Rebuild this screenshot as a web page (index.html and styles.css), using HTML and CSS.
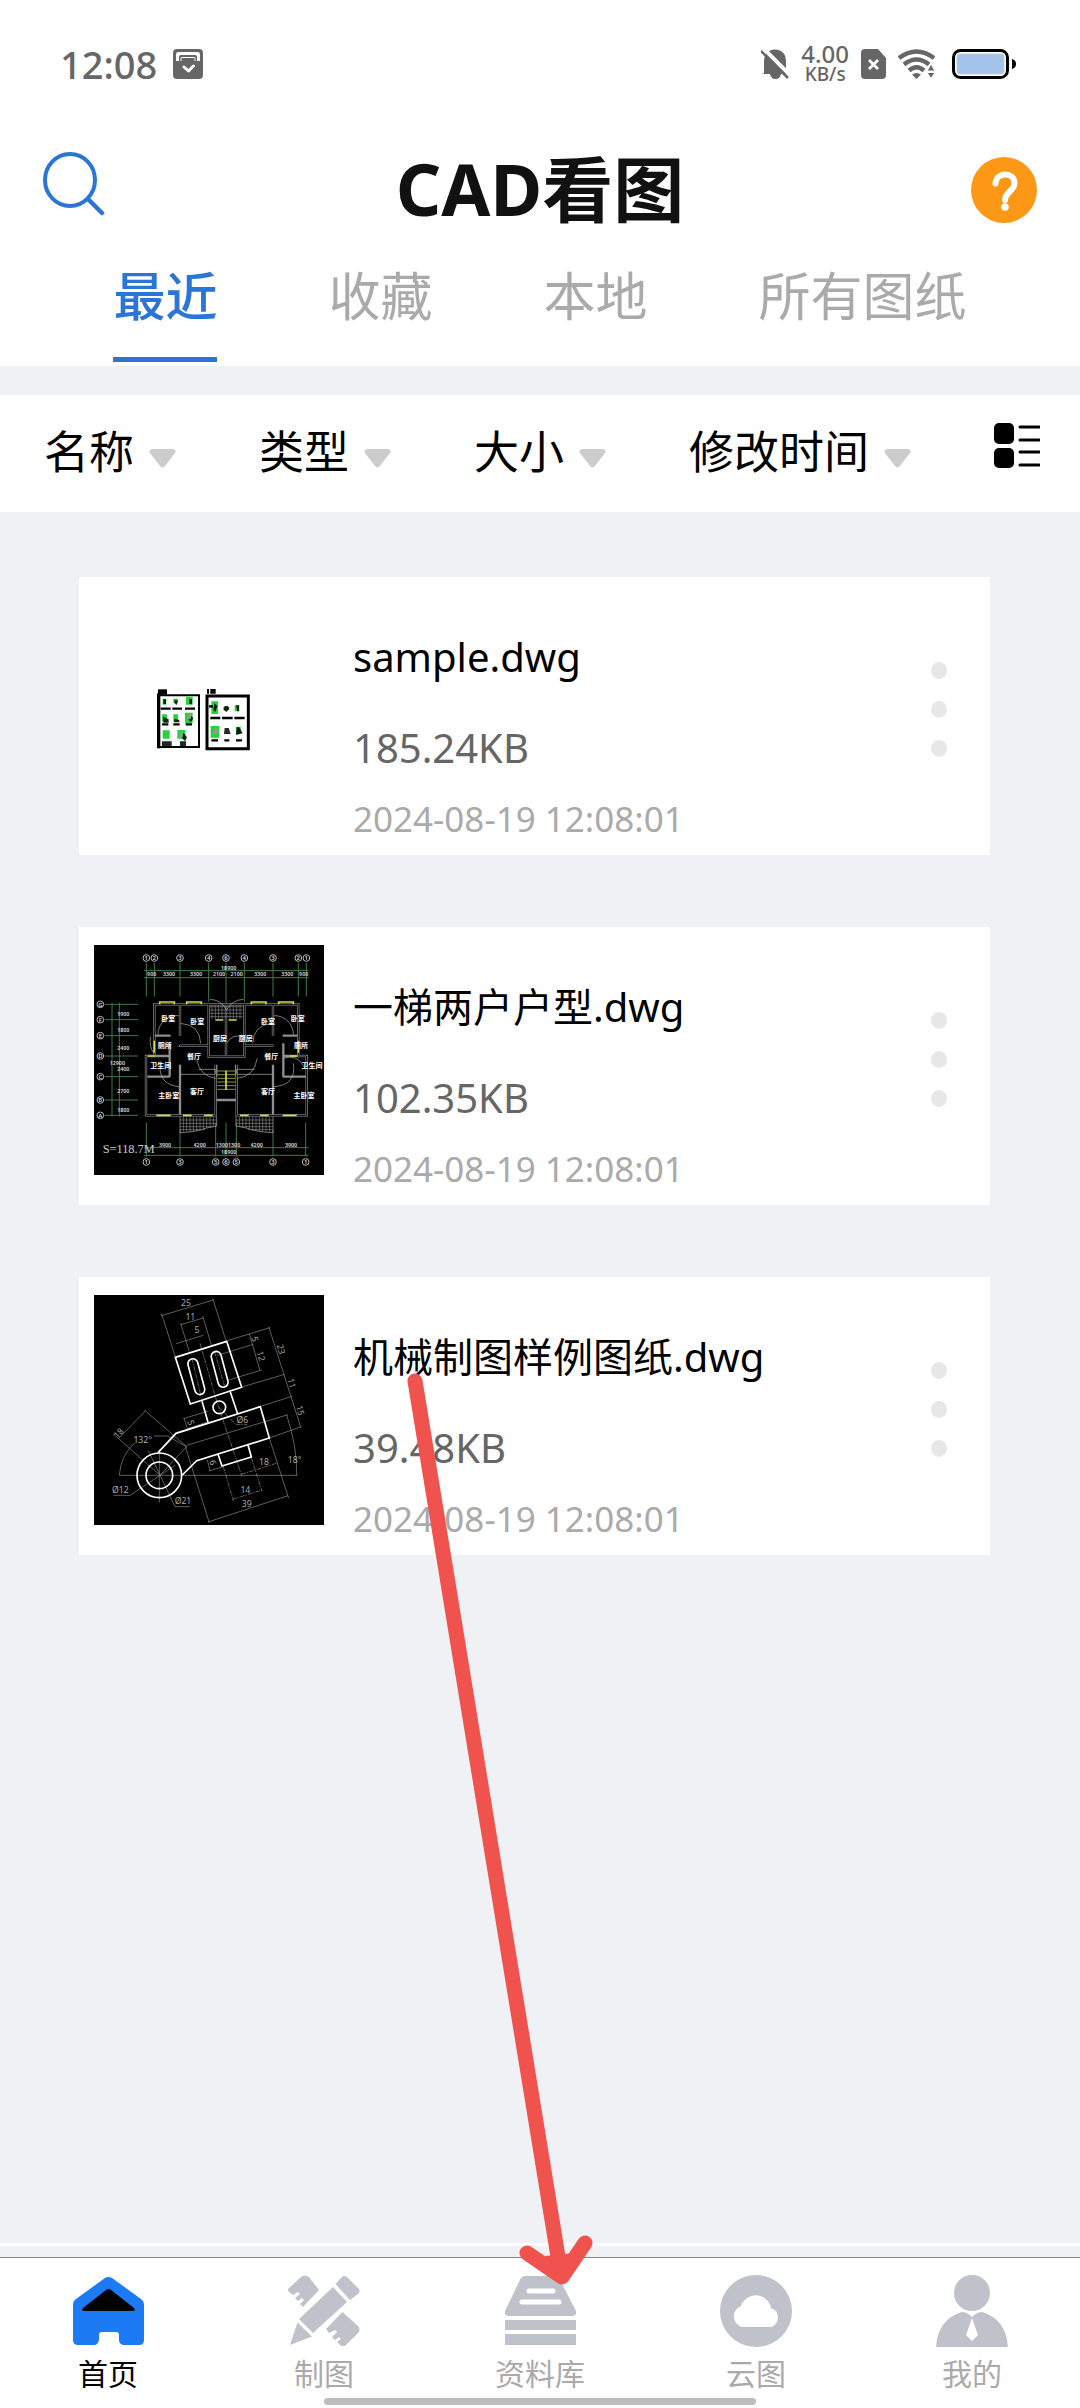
FILE: index.html
```
<!DOCTYPE html>
<html lang="zh-CN">
<head>
    <meta charset="UTF-8">
    <meta name="viewport" content="width=device-width, initial-scale=1.0">
    <title>CAD看图</title>
    <link rel="stylesheet" href="styles.css">
</head>
<body>
    <header class="header">
        <div class="status-bar">
            <span class="clock">12:08</span>
            <svg class="status-app" width="30" height="30" viewBox="0 0 30 30">
                <rect width="30" height="30" rx="4" fill="#666"/>
                <path d="M3 12V5.500Q3 3 5.500 3H24.500Q27 3 27 5.500V12H24V8Q24 6 22 6H8Q6 6 6 8V12Z" fill="#fff"/>
                <path d="M8 12V9.500Q8 8.500 9 8.500H21Q22 8.500 22 9.500V12" fill="#666" stroke="#fff" stroke-width="1"/>
                <path d="M11 18l4.500 4 5-5" fill="none" stroke="#fff" stroke-width="3" stroke-linecap="round" stroke-linejoin="round"/>
            </svg>
            <div class="status-right">
                <svg width="28" height="32" viewBox="0 0 28 32">
                    <path d="M3 25V14Q3 2 14 1.500Q25 2 25 14V22L27 26H1Z" fill="#666"/>
                    <path d="M9 26h11q-1 5-5.500 5T9 26Z" fill="#666"/>
                    <path d="M2 0L28 26" stroke="#fff" stroke-width="4"/>
                    <path d="M0 3L27 30" stroke="#666" stroke-width="2.500"/>
                </svg>
                <div class="net-speed"><span class="net-value">4.00</span><span class="net-unit">KB/s</span></div>
                <svg width="25" height="30" viewBox="0 0 25 30">
                    <path d="M4 0H17L25 9V26Q25 30 21 30H4Q0 30 0 26V4Q0 0 4 0Z" fill="#666"/>
                    <path d="M8 11l9 9M17 11l-9 9" stroke="#fff" stroke-width="2.800"/>
                </svg>
                <svg class="wifi" width="38" height="30" viewBox="0 0 38 30">
                    <g fill="none" stroke="#666" stroke-width="4.400">
                        <path d="M1 9Q18.500-4 36 9"/>
                        <path d="M6 15.500Q18.500 5.500 31 15.500"/>
                        <path d="M11 21.500Q18.500 15 26 21.500"/>
                    </g>
                    <path d="M14 25.500Q18.500 22.500 23 25.500L18.500 30Z" fill="#666"/>
                    <path d="M29 22l4-7 4 7zM29 23.500l4 6 4-6z" fill="#666" stroke="#fff" stroke-width="1"/>
                </svg>
                <svg width="64" height="30" viewBox="0 0 64 30">
                    <rect x="1.500" y="1.500" width="54" height="27" rx="7" fill="#fff" stroke="#000" stroke-width="3"/>
                    <rect x="5" y="5" width="47" height="20" rx="3" fill="#a3c3eb" stroke="#c5cad2" stroke-width="1"/>
                    <path d="M60 10Q64 11 64 15T60 20Z" fill="#000"/>
                </svg>
            </div>
        </div>

        <div class="title-bar">
            <button class="icon-button search" aria-label="搜索">
                <svg width="62" height="64" viewBox="0 0 62 64">
                    <ellipse cx="27" cy="28" rx="25" ry="26" fill="none" stroke="#2b76d5" stroke-width="4"/>
                    <path d="M45 47L59 61" stroke="#2b76d5" stroke-width="4.500" stroke-linecap="round"/>
                </svg>
            </button>
            <h1 class="title">CAD看图</h1>
            <button class="icon-button help" aria-label="帮助">
                <svg width="66" height="66" viewBox="0 0 66 66">
                    <circle cx="33" cy="33" r="33" fill="#fd9816"/>
                    <path d="M24.500 26.500C25 14.500 43.500 14.500 43.500 26C43.500 34 34 35 34 43" fill="none" stroke="#fff" stroke-width="6" stroke-linecap="round"/>
                    <circle cx="34" cy="50" r="3.800" fill="#fff"/>
                </svg>
            </button>
        </div>

        <nav class="tabs">
            <button class="tab active"><span>最近</span></button>
            <button class="tab"><span>收藏</span></button>
            <button class="tab"><span>本地</span></button>
            <button class="tab"><span>所有图纸</span></button>
        </nav>
    </header>

    <div class="filters">
        <button class="filter">名称
            <svg class="caret" width="27" height="19" viewBox="0 0 27 19"><path d="M3 0H24Q28 1 26 4L16 17Q13.500 20 11 17L1 4Q-1 1 3 0Z" fill="#ccc"/></svg>
        </button>
        <button class="filter">类型
            <svg class="caret" width="27" height="19" viewBox="0 0 27 19"><path d="M3 0H24Q28 1 26 4L16 17Q13.500 20 11 17L1 4Q-1 1 3 0Z" fill="#ccc"/></svg>
        </button>
        <button class="filter">大小
            <svg class="caret" width="27" height="19" viewBox="0 0 27 19"><path d="M3 0H24Q28 1 26 4L16 17Q13.500 20 11 17L1 4Q-1 1 3 0Z" fill="#ccc"/></svg>
        </button>
        <button class="filter">修改时间
            <svg class="caret" width="27" height="19" viewBox="0 0 27 19"><path d="M3 0H24Q28 1 26 4L16 17Q13.500 20 11 17L1 4Q-1 1 3 0Z" fill="#ccc"/></svg>
        </button>
        <button class="view-toggle" aria-label="切换视图">
            <svg width="46" height="46" viewBox="0 0 46 46">
                <rect x="0" y="0" width="20" height="21" rx="5"/>
                <rect x="0" y="25" width="20" height="20" rx="5"/>
                <path d="M26 4H45M26 17H45M26 29H45M26 42H45" stroke="#000" stroke-width="3" stroke-linecap="round"/>
            </svg>
        </button>
    </div>

    <main class="file-list">
        <article class="file-card">
            <svg class="thumb" viewBox="72 75 690 690">
                <path d="M266 376H387V531H266Z" fill="#fff" stroke="#000" stroke-width="6"/>
                <path d="M266 370V535" stroke="#000" stroke-width="10"/>
                <path d="M264 358H291V374H264Z"/>
                <path d="M411 378H535V536H411Z" fill="#fff" stroke="#000" stroke-width="9"/>
                <path d="M411 357h6v14h-6zM421 357h16v14h-16z"/>
                <g fill="#23d43a">
                    <path d="M278 386h11v18h-11zM310 386h14v12h-14zM348 380h20v24h-20zM276 433h15v22h-15zM310 433h14v22h-14zM345 428h23v32h-23zM278 481h21v25h-21zM322 480h24v26h-24z"/>
                    <path d="M424 394h20v38h-20zM460 410h16v10h-16zM494 406h14v18h-14zM422 468h26v35h-26zM498 470h14v22h-14z"/>
                </g>
                <path d="M272 416H302M307 416H336M345 416H375M276 463H295M310 463H329M347 463H366M421 444H451M456 444H488M493 444H524M424 511H444M463 511H478M498 511H516" stroke="#000" stroke-width="7"/>
                <path d="M276 514h29v16h-29zM330 514h18v16h-18zM280 388h8v14h-8zM314 390l10 2-4 13-7-6zM358 388h8v14h-8zM280 440l16 8v10h-16zM314 446l14 4v7h-16zM360 436l10 8-6 12-8-5zM340 488l11 14-6 12-9-10zM417 405h12v8h-12zM434 400l8 8-6 18-6-6zM464 408h10l4 9-9 9-8-7zM498 406h9v18h-5zM464 474h12l6 18h-20zM500 472h8l10 18-20 5z" opacity=".85"/>
                <path d="M355 432h8v14h-8zM328 490h10v12h-10zM436 472h6v20h-14z" fill="#999"/>
            </svg>
            <div class="file-info">
                <h2 class="file-name">sample.dwg</h2>
                <p class="file-size">185.24KB</p>
                <time class="file-date">2024-08-19 12:08:01</time>
            </div>
            <button class="more" aria-label="更多"><i></i><i></i><i></i></button>
        </article>

        <article class="file-card">
            <svg class="thumb dark" viewBox="42 45 690 690">
                <g fill="none" stroke="#3f7a48" stroke-width="3">
                    <path d="M199 98V200M223 98V200M300 98V200M386 98V215M438 98V225M493 98V215M579 98V200M655 98V200M679 98V200M192 122H686M192 143H686"/>
                    <path d="M199 578V680M300 600V680M407 578V680M438 578V680M469 578V680M579 600V680M677 578V680M192 653H686M192 676H686"/>
                    <path d="M74 223H174M74 269H174M74 317H174M74 378H174M74 440H174M74 510H174M74 556H174M96 218V560M118 218V560"/>
                </g>
                <g fill="none" stroke="#b9bab9" stroke-width="3">
                    <circle cx="199" cy="84" r="10"/><circle cx="223" cy="84" r="10"/><circle cx="300" cy="84" r="10"/><circle cx="386" cy="84" r="10"/><circle cx="438" cy="84" r="10"/><circle cx="493" cy="84" r="10"/><circle cx="579" cy="84" r="10"/><circle cx="655" cy="84" r="10"/><circle cx="679" cy="84" r="10"/>
                    <circle cx="199" cy="696" r="10"/><circle cx="300" cy="696" r="10"/><circle cx="407" cy="696" r="10"/><circle cx="438" cy="696" r="10"/><circle cx="469" cy="696" r="10"/><circle cx="579" cy="696" r="10"/><circle cx="677" cy="696" r="10"/>
                    <circle cx="61" cy="223" r="10"/><circle cx="61" cy="269" r="10"/><circle cx="61" cy="317" r="10"/><circle cx="61" cy="378" r="10"/><circle cx="61" cy="440" r="10"/><circle cx="61" cy="510" r="10"/><circle cx="61" cy="556" r="10"/>
                </g>
                <g class="plan-mark">
                    <text x="199" y="91">1</text><text x="223" y="91">2</text><text x="300" y="91">3</text><text x="386" y="91">4</text><text x="438" y="91">6</text><text x="493" y="91">4</text><text x="579" y="91">3</text><text x="655" y="91">2</text><text x="679" y="91">1</text>
                    <text x="199" y="703">1</text><text x="300" y="703">3</text><text x="407" y="703">5</text><text x="438" y="703">6</text><text x="469" y="703">5</text><text x="579" y="703">3</text><text x="677" y="703">1</text>
                    <text x="61" y="230">G</text><text x="61" y="276">F</text><text x="61" y="324">E</text><text x="61" y="385">D</text><text x="61" y="447">C</text><text x="61" y="517">B</text><text x="61" y="563">A</text>
                </g>
                <g class="plan-size">
                    <text x="446" y="119">18900</text><text x="215" y="139">900</text><text x="267" y="139">3300</text><text x="348" y="139">3300</text><text x="417" y="139">2100</text><text x="470" y="139">2100</text><text x="541" y="139">3300</text><text x="622" y="139">3300</text><text x="671" y="139">900</text>
                    <text x="130" y="259">1900</text><text x="130" y="306">1800</text><text x="130" y="361">2400</text><text x="112" y="405">12900</text><text x="130" y="422">2400</text><text x="130" y="488">2700</text><text x="130" y="545">1800</text>
                    <text x="255" y="651">3900</text><text x="359" y="651">4200</text><text x="444" y="651">13001300</text><text x="530" y="651">4200</text><text x="633" y="651">3900</text><text x="446" y="673">18900</text>
                </g>
                <!-- walls -->
                <g fill="none" stroke="#8d8d92" stroke-width="7">
                    <path d="M223 375V223H655V375M223 378H198V556H407V404M655 378H680V556H470V404"/>
                    <path d="M300 223V318M300 345V350M579 223V318M386 223V380H493V223M438 225V378M300 347H386M493 347H581M223 317H272M608 317H655M269 340V440M610 340V440M202 440H270M608 440H678M300 404V556M579 404V556M223 378H268M608 378H655M407 510H470"/>
                </g>
                <g fill="none" stroke="#000" stroke-width="3">
                    <path d="M223 375V223H655V375M223 378H198V556H407V404M655 378H680V556H470V404"/>
                    <path d="M300 223V318M579 223V318M386 223V380H493V223M438 225V378M300 347H386M493 347H581"/>
                </g>
                <g fill="none" stroke="#b5b5b5" stroke-width="2">
                    <path d="M234 313A56 56 0 0 1 296 257M302 280Q360 285 362 340M640 313A56 56 0 0 0 582 257M576 280Q520 285 518 340M390 208Q425 210 440 240Q455 210 490 208M350 390Q362 440 407 445M532 385Q522 440 472 445M240 400Q235 465 298 470M640 400Q650 465 582 470M440 340Q455 310 495 320M212 320Q206 350 222 370M610 385Q650 370 672 410"/>
                    <path d="M302 433H404M472 433H578M355 418H407V432M524 418H470V432M411 404V440M466 404V440"/>
                    <path d="M300 560V608Q350 606 380 594L410 588V560M579 560V608Q529 606 499 594L468 588V560"/>
                    <path d="M300 570H410M300 580H410M300 590H400M300 599H375M310 560V605M320 560V605M330 560V605M340 560V603M350 560V603M360 560V600M370 560V598M380 560V594M390 560V592M400 560V590M468 570H579M468 580H579M478 590H579M503 599H579M478 560V590M488 560V592M498 560V594M508 560V598M518 560V600M528 560V603M538 560V603M548 560V605M558 560V605M568 560V605" stroke="#858585"/>
                    <path d="M390 230H488M390 240H488M390 250H488M390 260H488M396 226V268M406 226V268M416 226V268M426 226V268M450 226V268M460 226V268M470 226V268M480 226V268" stroke="#858585"/>
                </g>
                <g fill="none" stroke="#d6d94c" stroke-width="5">
                    <path d="M239 223V216H283V223M320 223V216H364V223M514 223V216H558V223M596 223V216H640V223"/>
                    <path d="M406 270H430M446 270H470M223 332V368M655 332V368M229 556H272M608 556H650M309 556H335M372 556H398M480 556H506M540 556H566M203 378H225M630 378H650"/>
                    <path d="M412 423H466M412 434H466M412 445H466M412 456H466M412 467H466M412 478H466" stroke-width="2"/>
                    <path d="M438 422V480"/>
                </g>
                <g class="plan-room">
                    <text x="265" y="274">卧室</text><text x="352" y="282">卧室</text><text x="564" y="282">卧室</text><text x="653" y="274">卧室</text>
                    <text x="420" y="334">厨房</text><text x="497" y="334">厨房</text><text x="254" y="354">厕所</text><text x="663" y="354">厕所</text>
                    <text x="342" y="388">餐厅</text><text x="574" y="388">餐厅</text><text x="242" y="414">卫生间</text><text x="696" y="414">卫生间</text>
                    <text x="351" y="491">客厅</text><text x="564" y="491">客厅</text><text x="266" y="504">主卧室</text><text x="672" y="504">主卧室</text>
                </g>
                <text class="plan-area" x="68" y="669">S=118.7M</text>
            </svg>
            <div class="file-info">
                <h2 class="file-name">一梯两户户型.dwg</h2>
                <p class="file-size">102.35KB</p>
                <time class="file-date">2024-08-19 12:08:01</time>
            </div>
            <button class="more" aria-label="更多"><i></i><i></i><i></i></button>
        </article>

        <article class="file-card">
            <svg class="thumb dark" viewBox="42 45 690 690">
                <g fill="none" stroke="#8c8c8c" stroke-width="2">
                    <path d="M244 107L400 60M244 100L286 230M398 55L438 182M302 134L370 114M302 130L328 215M368 108L394 195M288 191L370 166"/>
                    <path d="M442 182L570 143M566 140L663 444M482 322L614 283M545 378L636 349M568 474L664 440M508 162L518 196M518 196L540 272M412 226L520 193M446 300L545 270"/>
                    <path d="M100 462L240 586M193 390L320 500M116 475L197 392M118 586Q122 525 165 488M222 468H262L320 500L240 586"/>
                    <path d="M118 586H652M650 586Q652 500 620 405M316 500L388 728M568 474L626 655M384 726L624 647M320 496L624 404" />
                    <path d="M238 508V668M205 512L285 680H330M100 646H150L285 556M310 416L385 393M312 414L322 446L385 425M386 573L430 560M382 540L390 572"/>
                    <path d="M430 560L460 662M514 533L546 634M458 658L546 630M484 583L592 549M360 190L412 370L486 590M418 382L468 434H502M336 235L362 345M404 215L434 320" stroke-dasharray="14 3 4 3"/>
                </g>
                <g fill="none" stroke="#fff" stroke-width="5">
                    <path d="M286 232L440 184L485 322L331 372ZM366 364L384 427M451 336L473 402"/>
                    <rect x="334" y="235" width="30" height="110" rx="15" transform="rotate(-15 349 290)"/>
                    <rect x="404" y="213" width="30" height="110" rx="15" transform="rotate(-15 419 268)"/>
                    <circle cx="418" cy="382" r="19"/>
                    <path d="M234 518L288 460L541 380L568 474L350 542L307 585M414 523L426 558L514 531L504 495"/>
                    <circle cx="238" cy="586" r="67"/>
                    <circle cx="238" cy="586" r="40"/>
                </g>
                <g class="part-size">
                    <text x="318" y="78">25</text><text x="331" y="119">11</text><text x="351" y="159">5</text>
                    <text transform="translate(516 180) rotate(75)">5</text><text transform="translate(534 230) rotate(75)">12</text><text transform="translate(594 210) rotate(75)">23</text><text transform="translate(626 312) rotate(75)">11</text><text transform="translate(652 394) rotate(75)">15</text>
                    <text transform="translate(122 466) rotate(-45)">18</text><text x="188" y="488">132°</text><text x="487" y="428">Ø6</text><text transform="translate(324 430) rotate(75)">5</text>
                    <text x="121" y="640">Ø12</text><text x="309" y="673">Ø21</text><text x="552" y="555">18</text><text x="496" y="640">14</text><text x="500" y="681">39</text><text x="644" y="549">18°</text><text transform="translate(390 550) rotate(75)">6</text>
                </g>
            </svg>
            <div class="file-info">
                <h2 class="file-name">机械制图样例图纸.dwg</h2>
                <p class="file-size">39.48KB</p>
                <time class="file-date">2024-08-19 12:08:01</time>
            </div>
            <button class="more" aria-label="更多"><i></i><i></i><i></i></button>
        </article>
    </main>

    <footer class="bottom">
        <nav class="bottom-nav">
            <a class="nav-item active" href="#">
                <svg width="72" height="72" viewBox="0 0 72 72">
                    <path d="M33 3Q36.500 1 40 3L69 24Q72 26 72 29V65Q72 70 67 70H51Q47 69 47 65V60Q47 57 44 57H30Q27 57 27 60V65Q26 70 22 70H6Q1 70 1 65V29Q1 26 4 24Z" fill="#1d7af5"/>
                    <path d="M34 15Q36.500 13 39 15L62 33Q64 36 61 36H12Q9 36 11 33Z" fill="#000"/>
                </svg>
                首页
            </a>
            <a class="nav-item" href="#">
                <svg width="72" height="72" viewBox="0 0 72 72" fill="#bfc2cb">
                    <path d="M45 12L59 27L25 58L11 44Z"/>
                    <path d="M47.500 9L53 3Q56-1 60 3L70 13Q73 16 70 19L62 25Z"/>
                    <path d="M9.500 47.500L24 61.500L2 70Z"/>
                    <path d="M1 13L13 2Q17-1 21 2L31 15L15 32L12 29L16 25L14 23L10 26L7 23L12 19L10 17L5 20L1 17Q-1 15 1 13Z"/>
                    <path d="M54.500 37L70 51Q73 55 70 58L59 69Q56 73 52 70L49 67L53 64L51 62L47 65L44 62L49 57L47 55L41 58L38 54Z"/>
                </svg>
                制图
            </a>
            <a class="nav-item" href="#">
                <svg width="72" height="72" viewBox="0 0 72 72" fill="#bfc2ca">
                    <path d="M22 1H51Q55 1 56 5L72 36Q73 41 68 41H5Q0 41 1 36L16 5Q17 1 22 1Z"/>
                    <path d="M1 45H72V55H1ZM1 59H72V70H1Z"/>
                    <path d="M25 16H49M18 27H55" stroke="#fff" stroke-width="5" stroke-linecap="round"/>
                </svg>
                资料库
            </a>
            <a class="nav-item" href="#">
                <svg width="72" height="72" viewBox="0 0 72 72">
                    <circle cx="36" cy="36" r="36" fill="#bfc2ca"/>
                    <path d="M22 52A11 11 0 0 1 21 31A15.500 15.500 0 0 1 51 33A10 10 0 0 1 51 52Z" fill="#fff"/>
                </svg>
                云图
            </a>
            <a class="nav-item" href="#">
                <svg width="72" height="72" viewBox="0 0 72 72">
                    <circle cx="36" cy="18" r="18" fill="#bfc2ca"/>
                    <path d="M0 72Q2 44 26 37Q31 37 36 42Q41 37 46 37Q70 44 72 72Z" fill="#bfc2ca"/>
                    <path d="M36 43L42 60L36 66L30 60Z" fill="#fff"/>
                </svg>
                我的
            </a>
        </nav>
        <div class="home-bar"></div>
    </footer>

    <!-- pointer to the library tab -->
    <svg class="pointer" width="200" height="930" viewBox="0 0 200 930">
        <path d="M15 18L161 912M127 890L162 914L185 880" fill="none" stroke="#f0524d" stroke-width="15" stroke-linecap="round" stroke-linejoin="round"/>
        <path d="M145 893L162 914L175 890Z" fill="#f0524d"/>
    </svg>
</body>
</html>
```
FILE: styles.css
```
* {
    box-sizing: border-box;
}
body {
    font-family: "Noto Sans", "Noto Sans CJK SC", sans-serif;
    background-color: #f0f1f5;
    color: #000;
    margin: 0;
    min-height: 100vh;
    display: flex;
    flex-direction: column;
    position: relative;
}
button {
    font: inherit;
    color: inherit;
    background: none;
    border: none;
    padding: 0;
    cursor: pointer;
}
svg {
    display: block;
    flex: none;
}
h1, h2, p {
    margin: 0;
    font-weight: 400;
}
.header {
    background-color: #fff;
    padding-bottom: 4px;
}
.status-bar {
    height: 128px;
    padding: 0 64px 0 60px;
    display: flex;
    align-items: center;
    color: #666;
}
.clock {
    font-size: 38px;
    font-weight: 500;
}
.status-app {
    margin-left: 16px;
}
.status-right {
    margin-left: auto;
    display: flex;
    align-items: center;
    gap: 12px;
}
.net-speed {
    display: flex;
    flex-direction: column;
    align-items: center;
    font-weight: 500;
    line-height: 20px;
}
.net-value {
    font-size: 24px;
}
.net-unit {
    font-size: 19px;
}
.wifi {
    margin-right: 4px;
}
.title-bar {
    height: 124px;
    padding: 0 43px;
    display: grid;
    grid-template-columns: 66px 1fr 66px;
    align-items: center;
}
.search {
    padding-bottom: 12px;
}
.title {
    font-size: 71px;
    font-weight: 700;
    line-height: 80px;
    padding-bottom: 2px;
    text-align: center;
    color: #111;
}
.tabs {
    display: flex;
    justify-content: center;
    gap: 1px;
}
.tab {
    padding: 18px 55px 0;
    font-size: 52px;
    font-weight: 400;
    line-height: 52px;
    color: #aaa;
}
.tab span {
    display: block;
    padding-bottom: 35px;
    border-bottom: 5px solid transparent;
}
.tab.active {
    color: #2b76d5;
    font-weight: 500;
}
.tab.active span {
    border-bottom-color: #2b76d5;
}
.filters {
    margin-top: 29px;
    height: 117px;
    padding: 0 40px 4px 44px;
    background-color: #fff;
    display: flex;
    align-items: center;
}
.filter {
    display: flex;
    align-items: center;
    gap: 15px;
    margin-right: 83px;
    font-size: 45px;
    line-height: 50px;
    white-space: nowrap;
}
.filter:nth-of-type(4) {
    margin-right: 0;
}
.caret {
    margin-top: 13px;
}
.view-toggle {
    margin-left: auto;
    padding-bottom: 12px;
}
.file-list {
    flex: 1;
    padding: 65px 90px 65px 79px;
    display: flex;
    flex-direction: column;
    gap: 72px;
}
.file-card {
    background-color: #fff;
    padding: 18px 43px 30px 15px;
    display: flex;
}
.thumb {
    width: 230px;
    height: 230px;
}
.thumb.dark {
    background-color: #000;
}
.file-info {
    margin: 37px 0 -19px 29px;
    flex: 1;
    line-height: 50px;
}
.file-name {
    font-size: 40px;
}
.file-size {
    font-size: 40px;
    color: #666;
    margin: 41px 0 21px;
}
.file-date {
    display: block;
    font-size: 35px;
    color: #aaa;
}
.more {
    align-self: flex-start;
    margin-top: 67px;
    display: flex;
    flex-direction: column;
    gap: 22px;
}
.more i {
    width: 16px;
    height: 17px;
    border-radius: 50%;
    background-color: #e7e7e7;
}
.plan-mark {
    fill: #ddd;
    font-size: 18px;
    font-weight: 600;
    text-anchor: middle;
}
.plan-size {
    fill: #ddd;
    font-size: 16px;
    font-weight: 600;
    text-anchor: middle;
}
.plan-room {
    fill: #fff;
    font-size: 21px;
    font-weight: 700;
    text-anchor: middle;
}
.plan-area {
    fill: #ccc;
    font-family: "Liberation Serif", serif;
    font-size: 37px;
}
.part-size {
    fill: #aaa;
    font-size: 26px;
    text-anchor: middle;
}
.bottom {
    border-top: 3px solid #fff;
}
.bottom-nav {
    margin-top: 11px;
    padding-top: 17px;
    border-top: 1px solid #888;
    background-color: #fff;
    display: grid;
    grid-template-columns: repeat(5, 1fr);
}
.nav-item {
    display: flex;
    flex-direction: column;
    align-items: center;
    gap: 7px;
    font-size: 30px;
    line-height: 40px;
    color: #aaa;
    text-decoration: none;
}
.nav-item.active {
    color: #000;
}
.home-bar {
    background-color: #fff;
    padding: 4px 0 3px;
}
.home-bar::before {
    content: "";
    display: block;
    width: 40%;
    height: 7px;
    margin: 0 auto;
    border-radius: 4px;
    background-color: #bdbdbd;
}
/* drawn over the list and the bottom tabs */
.pointer {
    position: absolute;
    left: 400px;
    bottom: 115px;
    pointer-events: none;
}
```
